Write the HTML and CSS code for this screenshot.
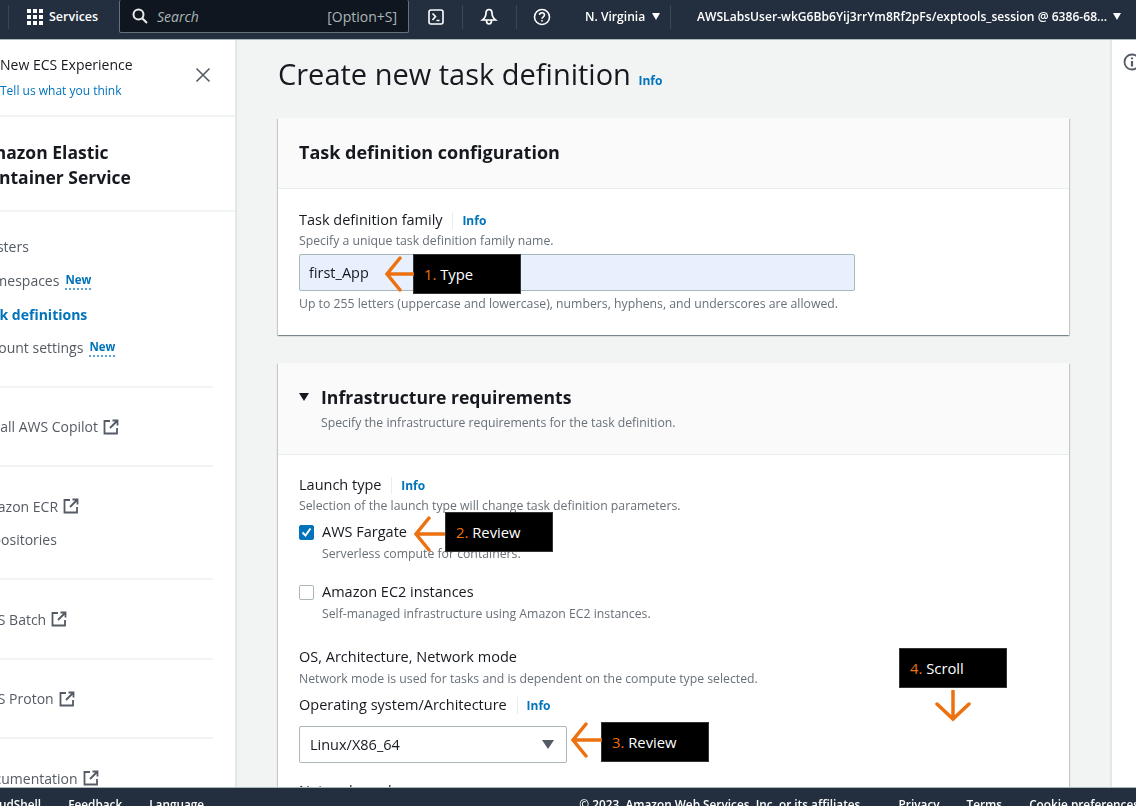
FILE: index.html
```html
<!DOCTYPE html>
<html lang="en">
<head>
    <meta charset="UTF-8">
    <title>Create new task definition</title>
    <link rel="stylesheet" href="styles.css">
</head>
<body>
    <div class="page">
        <header class="topbar">
            <span class="sep sep-first"></span>
            <svg class="grid-icon" width="16" height="16" viewBox="0 0 16 16" fill="#fff">
                <rect x="0" y="0" width="4" height="4"/><rect x="6" y="0" width="4" height="4"/><rect x="12" y="0" width="4" height="4"/>
                <rect x="0" y="6" width="4" height="4"/><rect x="6" y="6" width="4" height="4"/><rect x="12" y="6" width="4" height="4"/>
                <rect x="0" y="12" width="4" height="4"/><rect x="6" y="12" width="4" height="4"/><rect x="12" y="12" width="4" height="4"/>
            </svg>
            <span class="services">Services</span>
            <div class="search">
                <svg width="16" height="16" viewBox="0 0 16 16" fill="none" stroke="#e9ebed" stroke-width="2">
                    <circle cx="6.5" cy="6.5" r="5"/><line x1="10.2" y1="10.2" x2="15" y2="15"/>
                </svg>
                <span class="search-text">Search</span>
                <span class="search-key">[Option+S]</span>
            </div>
            <svg class="tb-icon shell" width="16" height="16" viewBox="0 0 16 16" fill="none" stroke="#fff" stroke-width="1.6">
                <rect x="1" y="1" width="14" height="14" rx="2"/><path d="M4.5 4.5l3 3-3 3.5M8.5 11.5h3"/>
            </svg>
            <span class="sep"></span>
            <svg class="tb-icon bell" width="18" height="18" viewBox="0 0 18 18" fill="none" stroke="#fff" stroke-width="1.7">
                <path d="M9 1.500c-2 0-3 1.500-3 3.500 0 3-1 5-3.500 7h13C13 10 12 8 12 5c0-2-1-3.500-3-3.500zM6.500 12.500c0 2 1 3.500 2.500 3.500s2.500-1.500 2.500-3.500"/>
            </svg>
            <span class="sep"></span>
            <svg class="tb-icon help" width="18" height="18" viewBox="0 0 18 18" fill="none" stroke="#fff" stroke-width="1.600">
                <circle cx="9" cy="9" r="7.500"/><path d="M6.500 7c0-1.500 1-2.300 2.500-2.300S11.500 5.600 11.500 7c0 1.800-2.500 1.800-2.500 3.800M9 12v1.500"/>
            </svg>
            <span class="region">N. Virginia</span>
            <span class="caret"></span>
            <span class="sep sep-user"></span>
            <span class="user">AWSLabsUser-wkG6Bb6Yij3rrYm8Rf2pFs/exptools_session @ 6386-68...</span>
            <span class="caret caret-user"></span>
        </header>

        <div class="layout">
            <aside class="sidebar">
                <div class="side-notice">
                    <div>
                        <div class="notice-title">New ECS Experience</div>
                        <a class="notice-link">Tell us what you think</a>
                    </div>
                    <svg class="close-icon" width="16" height="16" viewBox="0 0 16 16" stroke="#545b64" stroke-width="1.600" fill="none">
                        <path d="M1.500 1.500l13 13M14.500 1.500l-13 13"/>
                    </svg>
                </div>
                <div class="side-title">Amazon Elastic<br>Container Service</div>
                <ul class="side-group side-group-first">
                    <li>Clusters</li>
                    <li>Namespaces <span class="new-tag">New</span></li>
                    <li class="active">Task definitions</li>
                    <li>Account settings <span class="new-tag">New</span></li>
                </ul>
                <ul class="side-group">
                    <li>Install AWS Copilot <svg class="ext-icon" viewBox="0 0 16 16"><path d="M7 2H1.500v12.500H14V9M9.500 1.500H14.500V6.500M14.500 1.500L7 9"/></svg></li>
                </ul>
                <ul class="side-group">
                    <li>Amazon ECR <svg class="ext-icon" viewBox="0 0 16 16"><path d="M7 2H1.500v12.500H14V9M9.500 1.500H14.500V6.500M14.500 1.500L7 9"/></svg></li>
                    <li>Repositories</li>
                </ul>
                <ul class="side-group">
                    <li>AWS Batch <svg class="ext-icon" viewBox="0 0 16 16"><path d="M7 2H1.500v12.500H14V9M9.500 1.500H14.500V6.500M14.500 1.500L7 9"/></svg></li>
                </ul>
                <ul class="side-group">
                    <li>AWS Proton <svg class="ext-icon" viewBox="0 0 16 16"><path d="M7 2H1.500v12.500H14V9M9.500 1.500H14.500V6.500M14.500 1.500L7 9"/></svg></li>
                </ul>
                <ul class="side-group">
                    <li>Documentation <svg class="ext-icon" viewBox="0 0 16 16"><path d="M7 2H1.500v12.500H14V9M9.500 1.500H14.500V6.500M14.500 1.500L7 9"/></svg></li>
                </ul>
            </aside>

            <main class="content">
                <h1>Create new task definition <a class="info">Info</a></h1>

                <section class="card card-first">
                    <div class="card-head">
                        <h2>Task definition configuration</h2>
                    </div>
                    <div class="card-body">
                        <div class="label">Task definition family <a class="info">Info</a></div>
                        <div class="desc">Specify a unique task definition family name.</div>
                        <div class="text-input">first_App</div>
                        <div class="desc hint">Up to 255 letters (uppercase and lowercase), numbers, hyphens, and underscores are allowed.</div>
                    </div>
                </section>

                <section class="card">
                    <div class="card-head card-head-expand">
                        <span class="expand-caret"></span>
                        <div>
                            <h2>Infrastructure requirements</h2>
                            <div class="desc">Specify the infrastructure requirements for the task definition.</div>
                        </div>
                    </div>
                    <div class="card-body body-infra">
                        <div class="label">Launch type <a class="info">Info</a></div>
                        <div class="desc">Selection of the launch type will change task definition parameters.</div>
                        <div class="check-row">
                            <span class="checkbox checked">
                                <svg width="11" height="11" viewBox="0 0 11 11" fill="none" stroke="#fff" stroke-width="2"><path d="M1.500 5.500l3 3 5-7"/></svg>
                            </span>
                            <div class="check-text">
                                <div class="check-label">AWS Fargate</div>
                                <div class="desc">Serverless compute for containers.</div>
                            </div>
                        </div>
                        <div class="check-row check-row-second">
                            <span class="checkbox"></span>
                            <div class="check-text">
                                <div class="check-label">Amazon EC2 instances</div>
                                <div class="desc">Self-managed infrastructure using Amazon EC2 instances.</div>
                            </div>
                        </div>
                        <div class="label label-os">OS, Architecture, Network mode</div>
                        <div class="desc desc-os">Network mode is used for tasks and is dependent on the compute type selected.</div>
                        <div class="label label-arch">Operating system/Architecture <a class="info">Info</a></div>
                        <div class="select-box">
                            <span>Linux/X86_64</span>
                            <span class="select-caret"></span>
                        </div>
                        <div class="label label-net">Network mode</div>
                    </div>
                </section>
            </main>

            <aside class="rail">
                <svg width="18" height="18" viewBox="0 0 18 18" fill="none" stroke="#545b64" stroke-width="1.800">
                    <circle cx="9" cy="9" r="7.500"/><path d="M9 8v5.500M9 4.500v1.800" stroke-width="2.200"/>
                </svg>
            </aside>
        </div>

        <footer class="footer">
            <div class="footer-left">
                <span>CloudShell</span>
                <span>Feedback</span>
                <span>Language</span>
            </div>
            <div class="footer-right">
                <span class="copyright">© 2023, Amazon Web Services, Inc. or its affiliates.</span>
                <span>Privacy</span>
                <span>Terms</span>
                <span>Cookie preferences</span>
            </div>
        </footer>

        <!-- tutorial callouts drawn on top of the screenshot -->
        <div class="callout callout-1"><b>1.</b> Type</div>
        <svg class="arrow arrow-1" width="30" height="36" viewBox="0 0 30 36"><path d="M29 18H3M16 2L3 18l13 16"/></svg>
        <div class="callout callout-2"><b>2.</b> Review</div>
        <svg class="arrow arrow-2" width="32" height="36" viewBox="0 0 32 36"><path d="M31 18H3M16 2L3 18l13 16"/></svg>
        <div class="callout callout-3"><b>3.</b> Review</div>
        <svg class="arrow arrow-3" width="32" height="36" viewBox="0 0 32 36"><path d="M31 18H3M16 2L3 18l13 16"/></svg>
        <div class="callout callout-4"><b>4.</b> Scroll</div>
        <svg class="arrow arrow-4" width="36" height="32" viewBox="0 0 36 32"><path d="M18 1V29M2 14l16 15 16-15"/></svg>
    </div>
</body>
</html>
```

FILE: styles.css
```css
* {
    box-sizing: border-box;
    margin: 0;
    padding: 0;
}

html, body {
    height: 100%;
    overflow: hidden;
}

body {
    font-family: "Open Sans", "Noto Sans", sans-serif;
    color: #16191f;
    background: #f2f3f3;
}

.page {
    position: relative;
    display: flex;
    flex-direction: column;
    height: 806px;
    overflow: hidden;
    filter: blur(0.6px);
}

/* top bar */
.topbar {
    display: flex;
    align-items: center;
    flex: none;
    height: 40px;
    padding-bottom: 6px;
    background: #232f3e;
    border-bottom: 1px solid #aab7b8;
    color: #fff;
    font-size: 12.100px;
    font-weight: 600;
}

.topbar > * { flex: none; }

.sep {
    width: 1px;
    height: 24px;
    background: #3b4654;
}

.sep-first { margin-left: 8px; }

.grid-icon { margin-left: 18px; }

.services { margin-left: 6px; width: 70px; font-size: 12.500px; }

.search {
    display: flex;
    align-items: center;
    width: 290px;
    height: 33px;
    padding: 0 11px 0 12px;
    background: #10161f;
    border: 1px solid #687078;
    border-top: 0;
    border-radius: 2px;
    color: #aab7b8;
    font-weight: 400;
}

.search-text {
    margin-left: 9px;
    font-size: 14px;
    font-style: italic;
}

.search-key {
    margin-left: auto;
    font-size: 14px;
}

.shell { margin-left: 19px; }
.shell + .sep { margin-left: 18px; }
.bell { margin-left: 17px; }
.bell + .sep { margin-left: 18px; }
.help { margin-left: 16px; }

.region { margin-left: 34px; width: 67px; }

.caret {
    width: 0;
    height: 0;
    border-left: 4.500px solid transparent;
    border-right: 4.500px solid transparent;
    border-top: 7px solid #fff;
}

.sep-user { margin-left: 10px; }

.user { margin-left: 26px; white-space: nowrap; width: 416px; }

/* sidebar, main and right rail */
.layout {
    display: flex;
    flex: 1;
    min-height: 0;
}

.sidebar {
    flex: none;
    width: 237px;
    background: #fff;
    border-right: 2px solid #e4e7e8;
    overflow: hidden;
}

.side-notice {
    display: flex;
    justify-content: space-between;
    height: 77px;
    padding: 14px 24px 0 0;
    border-bottom: 2px solid #f2f3f3;
}

.notice-title {
    font-size: 14px;
    line-height: 22px;
    color: #16191f;
}

.notice-link {
    display: block;
    margin-top: 6px;
    font-size: 12px;
    line-height: 18px;
    color: #0073bb;
}

.close-icon { margin-top: 13px; }

.side-title {
    height: 95px;
    padding-top: 23px;
    margin-left: -23px;
    font-size: 17.500px;
    line-height: 25px;
    font-weight: 700;
    border-bottom: 2px solid #f2f3f3;
}

.side-group {
    list-style: none;
    margin: 0 22px 0 -24px;
    padding: 22px 0 21.800px;
    border-top: 2px solid #f2f3f3;
    font-size: 14px;
    color: #545b64;
}

.side-group-first {
    padding: 18px 0 21px;
    border-top: 0;
}

.side-group li {
    display: flex;
    align-items: center;
    gap: 3px;
    height: 33.700px;
}

.side-group .active {
    color: #0073bb;
    font-weight: 700;
}

.new-tag {
    margin-left: 3px;
    font-size: 11.500px;
    font-weight: 700;
    line-height: 16px;
    color: #0073bb;
    border-bottom: 2px dotted #5aa5d6;
}

.ext-icon {
    width: 16px;
    height: 16px;
    margin-left: 2px;
    fill: none;
    stroke: #545b64;
    stroke-width: 1.800;
}

.content {
    flex: 1;
    min-width: 0;
    padding-left: 41px;
    overflow: hidden;
}

h1 {
    height: 78px;
    padding-top: 13px;
    font-size: 29px;
    line-height: 42px;
    font-weight: 400;
    white-space: nowrap;
}

.info {
    font-size: 12px;
    font-weight: 700;
    color: #0073bb;
}

.card {
    width: 791px;
    margin-bottom: 28px;
    background: #fff;
    box-shadow: 0 1px 1px 0 rgba(0, 28, 36, 0.3), 1px 1px 1px 0 rgba(0, 28, 36, 0.15), -1px 1px 1px 0 rgba(0, 28, 36, 0.15);
}

.card-first { height: 217px; }

.card-head {
    height: 71px;
    padding: 21px 21px 0;
    background: #fafafa;
    border-bottom: 1px solid #eaeded;
}

h2 {
    font-size: 18px;
    line-height: 26px;
    font-weight: 700;
}

.card-head-expand {
    display: flex;
    height: 92px;
}

.card-head-expand h2 { font-size: 17.600px; }

.expand-caret {
    flex: none;
    width: 0;
    height: 0;
    margin: 9px 12px 0 0;
    border-left: 5px solid transparent;
    border-right: 5px solid transparent;
    border-top: 8px solid #16191f;
}

.card-head-expand .desc { margin-top: 4px; }

.card-body { padding: 20px 21px 0; }

.body-infra { padding-top: 19px; }

.label {
    font-size: 14.500px;
    line-height: 22px;
}

.label .info {
    margin-left: 6px;
    padding-left: 9px;
    border-left: 1px solid #eaeded;
}

.desc {
    font-size: 12.250px;
    line-height: 18px;
    color: #687078;
}

.text-input {
    display: flex;
    align-items: center;
    width: 556px;
    height: 37px;
    margin-top: 4px;
    padding-left: 9px;
    background: #e8f0fe;
    border: 1px solid #aab7b8;
    border-radius: 2px;
    font-size: 14.500px;
}

.hint { margin-top: 4px; }

.check-row {
    display: flex;
    gap: 8px;
    margin-top: 6px;
}

.check-row-second { margin-top: 18px; }

.checkbox {
    display: flex;
    align-items: center;
    justify-content: center;
    flex: none;
    width: 15px;
    height: 15px;
    margin-top: 4px;
    border: 1px solid #aab7b8;
    border-radius: 2px;
    background: #fff;
}

.checked {
    background: #0073bb;
    border-color: #0073bb;
}

.check-label {
    font-size: 14.500px;
    line-height: 22px;
}

.check-text .desc { margin-top: 2px; }

.label-os { margin-top: 23px; }

.desc-os { margin-top: 2px; }

.label-arch { margin-top: 6px; }

.select-box {
    display: flex;
    align-items: center;
    justify-content: space-between;
    width: 268px;
    height: 37px;
    margin-top: 9px;
    padding: 0 12px 0 10px;
    border: 1px solid #aab7b8;
    border-radius: 2px;
    font-size: 14.500px;
}

.select-caret {
    width: 0;
    height: 0;
    border-left: 6px solid transparent;
    border-right: 6px solid transparent;
    border-top: 9px solid #545b64;
}

.label-net { margin-top: 17px; }

.rail {
    flex: none;
    width: 26px;
    padding: 13px 0 0 11px;
    background: #fff;
    border-left: 2px solid #e4e7e8;
    overflow: hidden;
}

.rail svg { display: block; }

/* footer, only the top of its text is in the picture */
.footer {
    display: flex;
    justify-content: space-between;
    flex: none;
    height: 19px;
    background: #232f3e;
    border-top: 1px solid #aab7b8;
    color: #fff;
    font-size: 11.800px;
    font-weight: 600;
    line-height: 16px;
    padding-top: 8px;
    overflow: hidden;
}

.footer-left {
    display: flex;
    gap: 27px;
    margin-left: -19px;
}

.footer-right {
    display: flex;
    gap: 27px;
    margin-right: -3px;
    white-space: nowrap;
}

.copyright { margin-right: 8px; }

/* callouts */
.callout {
    position: absolute;
    width: 108px;
    height: 40px;
    padding: 9px 0 0 10px;
    background: #000;
    border: 1px solid #333;
    color: #fff;
    font-size: 14.800px;
    line-height: 20px;
}

.callout b {
    font-weight: 400;
    color: #ec7211;
}

.callout-1 { left: 413px; top: 254px; }
.callout-2 { left: 445px; top: 512px; }
.callout-3 { left: 601px; top: 722px; }
.callout-4 { left: 899px; top: 648px; }

.arrow {
    position: absolute;
    fill: none;
    stroke: #ec7211;
    stroke-width: 3.500;
    stroke-linecap: round;
}

.arrow-1 { left: 384px; top: 256px; }
.arrow-2 { left: 413px; top: 516px; }
.arrow-3 { left: 570px; top: 722px; }
.arrow-4 { left: 935px; top: 690px; }
```
